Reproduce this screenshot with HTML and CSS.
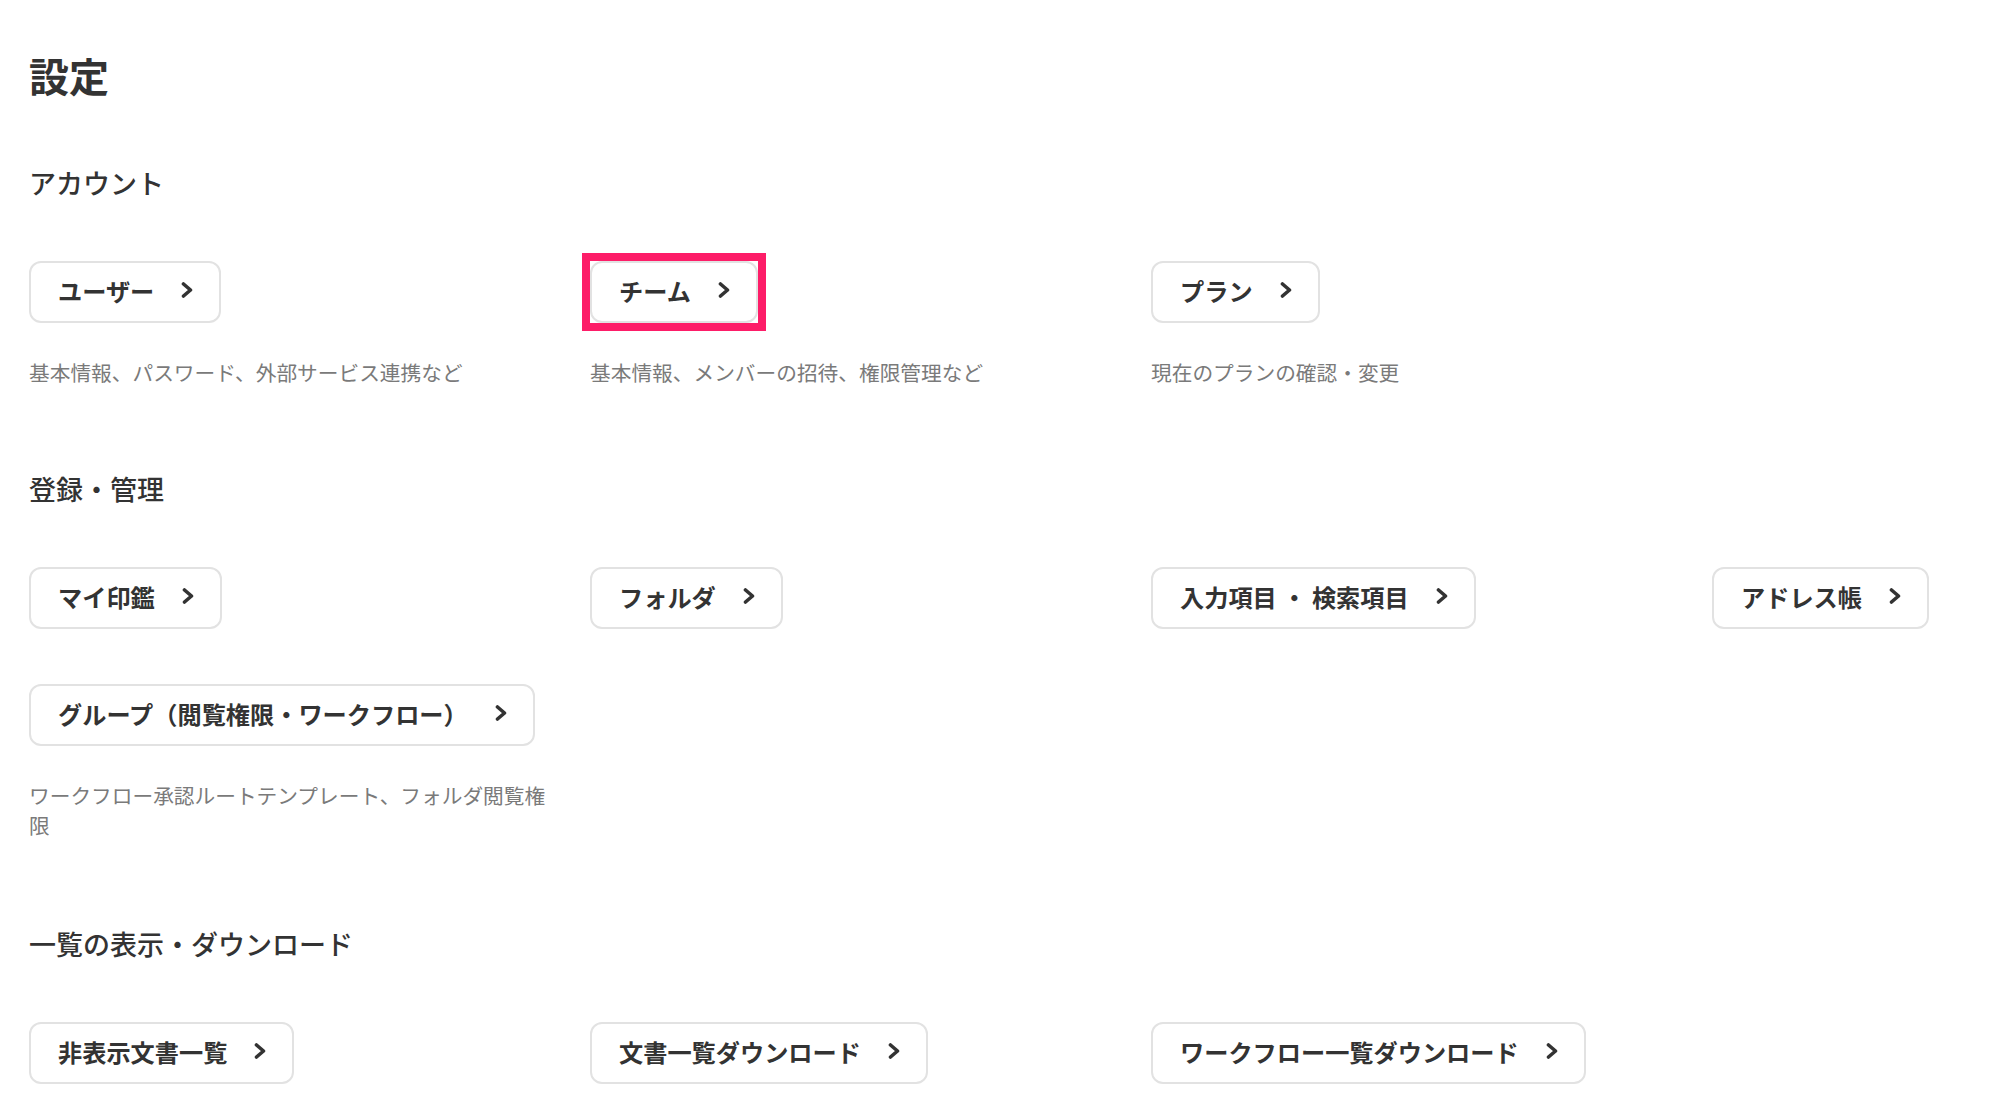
FILE: index.html
```html
<!DOCTYPE html>
<html lang="ja">
<head>
<meta charset="utf-8">
<title>設定</title>
<link rel="stylesheet" href="styles.css">
</head>
<body>
<main class="page">
  <h1 class="page-title">設定</h1>

  <section class="section">
    <h2 class="section-title">アカウント</h2>
    <div class="grid">
      <div class="item">
        <a class="btn" href="#">ユーザー<svg class="chev" viewBox="0 0 12 16" width="12" height="16"><polyline points="2.5,2 9.5,8 2.5,14"/></svg></a>
        <p class="desc">基本情報、パスワード、外部サービス連携など</p>
      </div>
      <div class="item">
        <span class="highlight"><a class="btn" href="#">チーム<svg class="chev" viewBox="0 0 12 16" width="12" height="16"><polyline points="2.5,2 9.5,8 2.5,14"/></svg></a></span>
        <p class="desc">基本情報、メンバーの招待、権限管理など</p>
      </div>
      <div class="item">
        <a class="btn" href="#">プラン<svg class="chev" viewBox="0 0 12 16" width="12" height="16"><polyline points="2.5,2 9.5,8 2.5,14"/></svg></a>
        <p class="desc">現在のプランの確認・変更</p>
      </div>
    </div>
  </section>

  <section class="section">
    <h2 class="section-title">登録・管理</h2>
    <div class="grid">
      <div class="item">
        <a class="btn" href="#">マイ印鑑<svg class="chev" viewBox="0 0 12 16" width="12" height="16"><polyline points="2.5,2 9.5,8 2.5,14"/></svg></a>
      </div>
      <div class="item">
        <a class="btn" href="#">フォルダ<svg class="chev" viewBox="0 0 12 16" width="12" height="16"><polyline points="2.5,2 9.5,8 2.5,14"/></svg></a>
      </div>
      <div class="item">
        <a class="btn" href="#">入力項目 ・ 検索項目<svg class="chev" viewBox="0 0 12 16" width="12" height="16"><polyline points="2.5,2 9.5,8 2.5,14"/></svg></a>
      </div>
      <div class="item">
        <a class="btn" href="#">アドレス帳<svg class="chev" viewBox="0 0 12 16" width="12" height="16"><polyline points="2.5,2 9.5,8 2.5,14"/></svg></a>
      </div>
      <div class="item">
        <a class="btn" href="#">グループ（閲覧権限・ワークフロー）<svg class="chev" viewBox="0 0 12 16" width="12" height="16"><polyline points="2.5,2 9.5,8 2.5,14"/></svg></a>
        <p class="desc">ワークフロー承認ルートテンプレート、フォルダ閲覧権限</p>
      </div>
    </div>
  </section>

  <section class="section">
    <h2 class="section-title">一覧の表示・ダウンロード</h2>
    <div class="grid">
      <div class="item">
        <a class="btn" href="#">非表示文書一覧<svg class="chev" viewBox="0 0 12 16" width="12" height="16"><polyline points="2.5,2 9.5,8 2.5,14"/></svg></a>
      </div>
      <div class="item">
        <a class="btn" href="#">文書一覧ダウンロード<svg class="chev" viewBox="0 0 12 16" width="12" height="16"><polyline points="2.5,2 9.5,8 2.5,14"/></svg></a>
      </div>
      <div class="item">
        <a class="btn" href="#">ワークフロー一覧ダウンロード<svg class="chev" viewBox="0 0 12 16" width="12" height="16"><polyline points="2.5,2 9.5,8 2.5,14"/></svg></a>
      </div>
    </div>
  </section>
</main>
</body>
</html>
```

FILE: styles.css
```css
* {
  box-sizing: border-box;
}

html, body {
  margin: 0;
  padding: 0;
  background: #ffffff;
}

body {
  font-family: "Noto Sans CJK JP", "Noto Sans", sans-serif;
  color: #333333;
  overflow: hidden;
}

.page {
  padding: 51px 0 0 29px;
}

.page-title {
  margin: 0;
  font-size: 40px;
  line-height: 48px;
  font-weight: 700;
  color: #333333;
}

.section {
  margin-top: 64px;
}

.section + .section {
  margin-top: 82px;
}

.section + .section + .section {
  margin-top: 84px;
}

.section-title {
  margin: 0;
  font-size: 27px;
  line-height: 40px;
  font-weight: 500;
  color: #333333;
}

.grid {
  margin-top: 58px;
  display: grid;
  grid-template-columns: repeat(3, 532px) minmax(0, 1fr);
  column-gap: 29px;
  row-gap: 55px;
}

.item {
  display: flex;
  flex-direction: column;
  align-items: flex-start;
}

.btn {
  display: inline-flex;
  align-items: center;
  gap: 27px;
  height: 62px;
  padding: 0 26px 4px 27px;
  border: 2px solid #e2e2e2;
  border-radius: 12px;
  background: #ffffff;
  color: #333333;
  font-size: 24.2px;
  font-weight: 700;
  text-decoration: none;
  white-space: nowrap;
}

.highlight {
  display: inline-flex;
  outline: 8px solid #fd1d68;
  outline-offset: 0;
}

.chev {
  flex: none;
  fill: none;
  stroke: #333333;
  stroke-width: 3.6;
  stroke-linecap: round;
  stroke-linejoin: round;
}

.desc {
  margin: 34px 0 0;
  font-size: 20.7px;
  line-height: 30px;
  color: #7a7a7a;
  max-width: 532px;
}
```
